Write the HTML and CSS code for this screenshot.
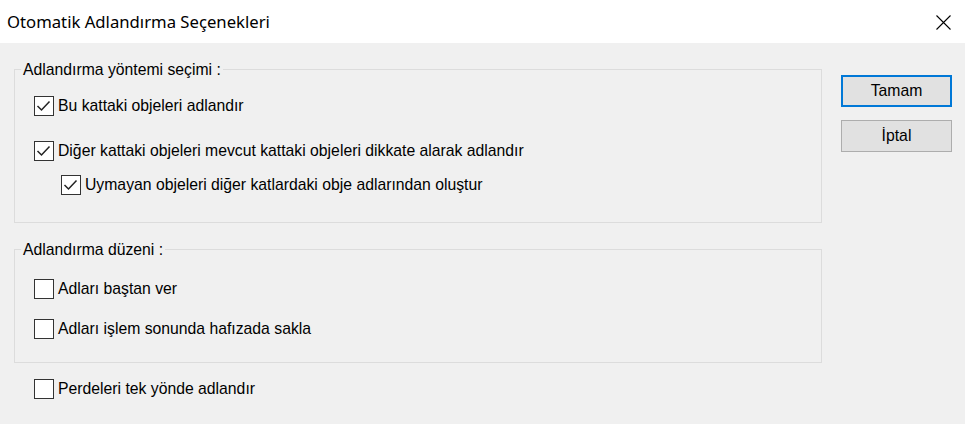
FILE: index.html
```html
<!DOCTYPE html>
<html lang="tr">
<head>
    <meta charset="UTF-8">
    <meta name="viewport" content="width=device-width, initial-scale=1.0">
    <title>Otomatik Adlandırma Seçenekleri</title>
    <link rel="stylesheet" href="styles.css">
</head>
<body>
    <div class="dialog">
        <div class="titlebar">
            <span class="title">Otomatik Adlandırma Seçenekleri</span>
            <button class="close" aria-label="Kapat">
                <svg width="15" height="15" viewBox="0 0 15 15">
                    <path d="M0.5 0.5 L14.5 14.5 M14.5 0.5 L0.5 14.5" stroke="#000" stroke-width="1.1" fill="none"/>
                </svg>
            </button>
        </div>

        <div class="content">
            <div class="options">
                <fieldset class="group group-method">
                    <legend>Adlandırma yöntemi seçimi :</legend>
                    <label class="option row-first">
                        <span class="box checked"><svg viewBox="0 0 20 20"><polyline points="3.5,10 7.5,14 15.5,5.5"/></svg></span>
                        Bu kattaki objeleri adlandır
                    </label>
                    <label class="option row-second">
                        <span class="box checked"><svg viewBox="0 0 20 20"><polyline points="3.5,10 7.5,14 15.5,5.5"/></svg></span>
                        Diğer kattaki objeleri mevcut kattaki objeleri dikkate alarak adlandır
                    </label>
                    <label class="option option-nested">
                        <span class="box checked"><svg viewBox="0 0 20 20"><polyline points="3.5,10 7.5,14 15.5,5.5"/></svg></span>
                        Uymayan objeleri diğer katlardaki obje adlarından oluştur
                    </label>
                </fieldset>

                <fieldset class="group group-order">
                    <legend>Adlandırma düzeni :</legend>
                    <label class="option row-first">
                        <span class="box"></span>
                        Adları baştan ver
                    </label>
                    <label class="option row-next">
                        <span class="box"></span>
                        Adları işlem sonunda hafızada sakla
                    </label>
                </fieldset>

                <label class="option option-loose">
                    <span class="box"></span>
                    Perdeleri tek yönde adlandır
                </label>
            </div>

            <div class="actions">
                <button class="btn btn-default">Tamam</button>
                <button class="btn">İptal</button>
            </div>
        </div>
    </div>
</body>
</html>
```

FILE: styles.css
```css
body {
    margin: 0;
    background-color: #f0f0f0;
    font-family: "Liberation Sans", Arial, sans-serif;
    font-size: 15.75px;
    color: #000;
}
.dialog {
    width: 965px;
    height: 424px;
    overflow: hidden;
}
.titlebar {
    height: 43px;
    background: #fff;
    display: flex;
    align-items: center;
    justify-content: space-between;
    padding: 0 14px 0 7px;
}
.title {
    font-family: "Noto Sans", sans-serif;
    font-size: 16.7px;
}
.close {
    border: none;
    background: none;
    padding: 0;
    width: 15px;
    height: 15px;
    display: flex;
    margin-top: 1px;
}
.content {
    display: flex;
    align-items: flex-start;
    padding-left: 14px;
}
.options {
    width: 808px;
    margin-top: 17px;
}
.group {
    margin: 0;
    padding: 0;
    border: 1px solid #dcdcdc;
}
.group legend {
    margin-left: 6px;
    padding: 0 2px;
    line-height: 19px;
}
.group-method {
    padding-bottom: 27px;
}
.group-order {
    margin-top: 17px;
    padding-bottom: 23px;
}
.option {
    display: flex;
    align-items: center;
    gap: 4px;
    height: 20px;
    margin-left: 19px;
    white-space: nowrap;
}
.row-first {
    margin-top: 17px;
}
.group-order .row-first {
    margin-top: 20px;
}
.row-second {
    margin-top: 25px;
}
.row-next {
    margin-top: 20px;
}
.option-nested {
    margin-top: 14px;
    margin-left: 46px;
}
.option-loose {
    margin-top: 16px;
    margin-left: 20px;
}
.box {
    box-sizing: border-box;
    width: 20px;
    height: 20px;
    border: 1px solid #333;
    background: #fff;
    flex-shrink: 0;
    position: relative;
}
.box svg {
    position: absolute;
    left: -1px;
    top: -1px;
    width: 20px;
    height: 20px;
}
.box polyline {
    fill: none;
    stroke: #222;
    stroke-width: 1.5;
}
.actions {
    margin-left: 19px;
    margin-top: 32px;
    display: flex;
    flex-direction: column;
    gap: 13px;
}
.btn {
    box-sizing: border-box;
    width: 111px;
    height: 32px;
    background: #e1e1e1;
    border: 1px solid #adadad;
    font-family: "Liberation Sans", Arial, sans-serif;
    font-size: 15.75px;
    color: #000;
    padding: 0;
}
.btn-default {
    border: 2px solid #0078d7;
}
```
